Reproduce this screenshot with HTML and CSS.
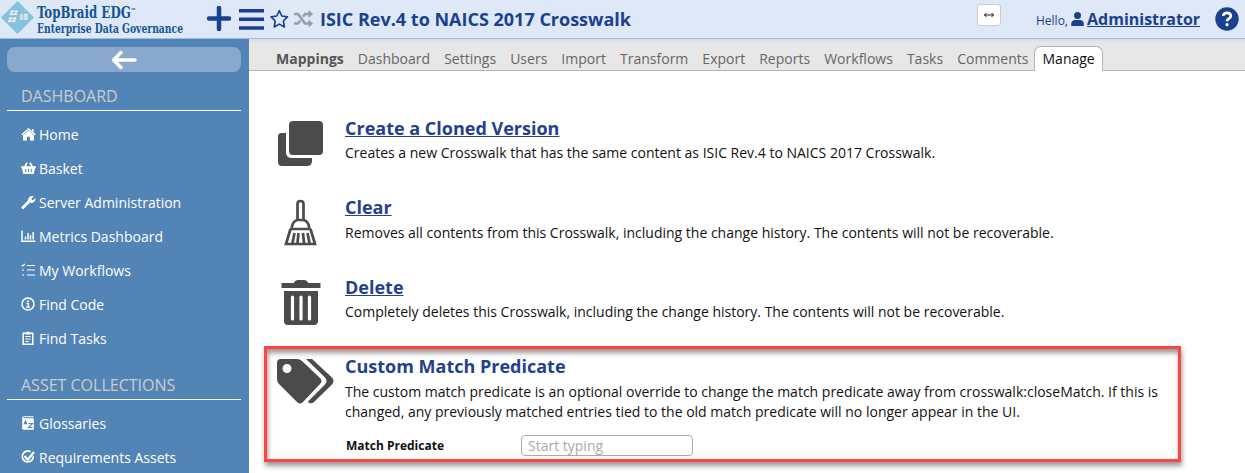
FILE: index.html
```html
<!DOCTYPE html>
<html lang="en">
<head>
<meta charset="utf-8">
<title>ISIC Rev.4 to NAICS 2017 Crosswalk</title>
<link rel="stylesheet" href="styles.css">
</head>
<body>
<header class="topbar">
  <svg class="logo" width="190" height="38" viewBox="0 0 190 38">
    <path d="M17.500 1L34 17.500L17.500 34L1 17.500Z" fill="#84c3df"/>
    <g fill="#eef4f7" stroke="#8fb0c2" stroke-width=".6">
      <path d="M10.500 10h8l-1.500 5.500H9zM9 17h8l-1.500 5.500H7.200zM19.500 14l8.500-.5.500 6.500h-9z"/>
      <path d="M10 12.800h8M8 19.800h8M19.500 16h9M19.500 18h9M14.500 10L13 15.500M13 17l-1.500 5.500M23.500 14v6" fill="none"/>
    </g>
    <g class="logo-text">
      <text x="37" y="17.500" font-size="16" textLength="99" lengthAdjust="spacingAndGlyphs">TopBraid EDG<tspan font-size="7" dy="-5">™</tspan></text>
      <text x="37" y="32.500" font-size="13.500" textLength="146" lengthAdjust="spacingAndGlyphs">Enterprise Data Governance</text>
    </g>
  </svg>
  <svg class="tool-icons" width="107" height="26" viewBox="0 0 107 26">
    <g fill="none" stroke="#19418f" stroke-linecap="round">
      <path d="M13 2v21M3 12.500h20" stroke-width="4.500"/>
      <path d="M33 4.700h25M33 13.300h25M33 22h25" stroke-width="3.600" stroke-linecap="butt"/>
      <path d="M73.300 4.700l2.500 5.300 5.700.9-4.100 4.100 1 6-5.100-2.900-5.100 2.900 1-6-4.100-4.100 5.700-.9z" stroke-width="1.600" stroke-linejoin="round"/>
    </g>
    <g fill="none" stroke="#989ca5" stroke-width="2.500"><path d="M88 8h4l7 9.500h4M88 17.500h4l2.300-3M97 10.800l2-2.800h4"/></g>
    <path d="M102.500 4l4.500 4-4.500 4zM102.500 13.500l4.500 4-4.500 4z" fill="#989ca5"/>
  </svg>
  <h1 class="title">ISIC Rev.4 to NAICS 2017 Crosswalk</h1>
  <button class="resize" aria-label="Resize"><svg width="12" height="8" viewBox="0 0 12 8"><path d="M1 4h10M3.500 2l-2 2 2 2M8.500 2l2 2-2 2" fill="none" stroke="#222"/></svg></button>
  <div class="account">
    <span class="hello">Hello,</span>
    <svg width="13" height="14" viewBox="0 0 13 14" fill="#19418f"><circle cx="6.500" cy="3.500" r="3.500"/><path d="M.2 14v-2c0-3 2-4 4-4h4.600c2 0 4 1 4 4v2z"/></svg>
    <a class="admin">Administrator</a>
  </div>
  <svg class="help" width="24" height="24" viewBox="0 0 24 24"><circle cx="12" cy="12" r="11.700" fill="#19418f"/><path d="M8.200 9c0-4.400 7.600-4 7.600 0 0 2.600-3.800 2.600-3.800 5.200" fill="none" stroke="#fff" stroke-width="2.700"/><circle cx="12" cy="17.700" r="1.600" fill="#fff"/></svg>
</header>
<div class="body">
  <aside class="sidebar">
    <button class="back" aria-label="Back"><svg width="26" height="20" viewBox="0 0 26 20"><path d="M24 10H3M10 2.500L2.500 10l7.500 7.500" fill="none" stroke="#fff" stroke-width="3.500" stroke-linecap="round" stroke-linejoin="round"/></svg></button>
    <h2 class="section">DASHBOARD</h2>
    <nav class="nav">
      <a><svg viewBox="0 0 15 14"><path d="M7.500 3.500L13 8v5.500H9V9.800H6v3.700H2V8z"/><path d="M.7 7.800L7.500 2l6.800 5.800M11.800 2v3" fill="none" stroke="#fff" stroke-width="1.500"/></svg>Home</a>
      <a><svg viewBox="0 0 15 14"><path d="M3.500 6.500L6 1.700M11.500 6.500L9 1.700" fill="none" stroke="#fff" stroke-width="1.700"/><path d="M.2 5.200h14.600v2H14L12.800 13H2.200L1 7.200H.2z"/><path d="M4.700 8v3M7.500 8v3M10.300 8v3" stroke="#5384b6"/></svg>Basket</a>
      <a><svg viewBox="0 0 15 14"><path d="M2 12.500L8.500 6" stroke="#fff" stroke-width="3" stroke-linecap="round"/><path d="M12.800 1.200L10.500 3.500l.3 1.300 1.400.4 2-2.200c1 4-3 5.700-5.400 4.500L7 6.200C6.500 2.500 9.600.2 12.800 1.200z"/></svg>Server Administration</a>
      <a><svg viewBox="0 0 15 14"><path d="M1 1.500v10.700h13.500M4.500 7.500v3M7 4v6.500M9.500 6v4.500M12.200 3v7.500" fill="none" stroke="#fff" stroke-width="1.500"/></svg>Metrics Dashboard</a>
      <a><svg viewBox="0 0 15 14"><path d="M6 2.500h8M6 7h8M6 12h8M.7 2l1 1L4 1M1 7h2M1 12h2" fill="none" stroke="#fff" stroke-width="1.200"/></svg>My Workflows</a>
      <a><svg viewBox="0 0 15 14"><circle cx="7" cy="7" r="6" fill="none" stroke="#fff" stroke-width="1.600"/><circle cx="7" cy="4.200" r="1"/><path d="M5.500 6.500h1.800V10M5.300 10.300h3.500" fill="none" stroke="#fff" stroke-width="1.400"/></svg>Find Code</a>
      <a><svg viewBox="0 0 15 14"><path d="M2.200 2.200h9.600v11H2.200z" fill="none" stroke="#fff" stroke-width="1.500"/><path d="M4.500 1.500h1L7 .2l1.500 1.300h1v2h-5zM4.300 5h5.400v1H4.300zM4.300 7.500h5.400v1H4.300zM4.300 10h3.500v1H4.300z"/></svg>Find Tasks</a>
    </nav>
    <h2 class="section second">ASSET COLLECTIONS</h2>
    <nav class="nav">
      <a><svg viewBox="0 0 15 14"><path d="M2.500.2h10v1h-10v1h10.300v11.600H2.200L1.200 13V1.500z"/><path d="M3 8.500L4.500 5 6 8.500M3.500 7.500h2M7.500 7.500h4l-4 4h4" fill="none" stroke="#5384b6" stroke-width="1.100"/></svg>Glossaries</a>
      <a><svg viewBox="0 0 15 14"><path d="M9.500 1.700A5.500 5.500 0 1 0 12.300 6" fill="none" stroke="#fff" stroke-width="1.700"/><path d="M3.500 6l3.200 3.700L13 2" fill="none" stroke="#fff" stroke-width="2.300"/></svg>Requirements Assets</a>
    </nav>
  </aside>
  <main class="main">
    <nav class="tabs">
      <a class="bold">Mappings</a><a>Dashboard</a><a>Settings</a><a>Users</a><a>Import</a><a>Transform</a><a>Export</a><a>Reports</a><a>Workflows</a><a>Tasks</a><a>Comments</a><a class="active">Manage</a>
    </nav>
    <div class="actions">
      <section class="action">
        <svg width="60" height="48" viewBox="0 0 60 48" fill="#4b4b4b"><rect x="17" y="1" width="34" height="34" rx="4"/><path d="M14 13H9.500Q6 13 6 16.500v25Q6 46 10 46h25q5 0 5-5v-3H20q-6 0-6-6z"/></svg>
        <div><h3><a>Create a Cloned Version</a></h3><p>Creates a new Crosswalk that has the same content as ISIC Rev.4 to NAICS 2017 Crosswalk.</p></div>
      </section>
      <section class="action">
        <svg width="60" height="48" viewBox="0 0 60 48" fill="none" stroke="#4b4b4b" stroke-width="2.700"><path d="M25.500 22V5q0-3 3-3t3 3v17M19.500 30q1-8 6-9h6q5 1 6 9zM18.500 30L14 45h29l-4.500-15M22.500 34l-2 10M26.500 34l-1 10M31 34l1 10M35.500 34l2 10"/></svg>
        <div><h3><a>Clear</a></h3><p>Removes all contents from this Crosswalk, including the change history. The contents will not be recoverable.</p></div>
      </section>
      <section class="action">
        <svg width="60" height="48" viewBox="0 0 60 48" fill="#4b4b4b"><path d="M9.500 4h12q2-3 4-3h7q2 0 4 3h12v5h-39zM12 12h34v30q0 4-4 4H16q-4 0-4-4z"/><path d="M20.500 18v22M29 18v22M37.500 18v22" stroke="#fff" stroke-width="3.200" stroke-linecap="round"/></svg>
        <div><h3><a>Delete</a></h3><p>Completely deletes this Crosswalk, including the change history. The contents will not be recoverable.</p></div>
      </section>
      <section class="action framed">
        <svg width="62" height="48" viewBox="0 0 62 48" fill="#4b4b4b"><path fill-rule="evenodd" d="M9 1h16q3 0 5 2l18 17q3 3 0 6L31 44q-3 3-6 0L7 26q-2-2-2-5V5q0-4 4-4zM15 6a4.500 4.500 0 1 0 0 9a4.500 4.500 0 1 0 0-9"/><path d="M34 1h6l20 18.500q3 3.500 0 7L43 43q-2 3-6 2l-1-1.500L52.500 27q4-4 0-8z"/></svg>
        <div><h3>Custom Match Predicate</h3><p class="long">The custom match predicate is an optional override to change the match predicate away from crosswalk:closeMatch. If this is<br>changed, any previously matched entries tied to the old match predicate will no longer appear in the UI.</p>
          <div class="field"><label for="predicate">Match Predicate</label><input id="predicate" placeholder="Start typing"></div>
        </div>
      </section>
    </div>
  </main>
</div>
</body>
</html>
```

FILE: styles.css
```css
* { box-sizing: border-box; }
body { margin: 0; width: 1245px; height: 473px; overflow: hidden; font-family: "Open Sans", sans-serif; font-size: 14px; color: #111; background: #fff; }
h1, h2, h3, p { margin: 0; }
button { padding: 0; border: 0; }
svg { display: block; flex: none; }

.topbar { height: 39px; display: flex; align-items: center; background: #dfe8f6; border-bottom: 1px solid #99bbe8; color: #19418f; }
.logo { width: 190px; overflow: visible; }
.logo-text { font-family: "DejaVu Serif Condensed", "DejaVu Serif", serif; font-weight: bold; fill: #145592; }
.tool-icons { margin-left: 16px; }
.title { margin-left: 7px; width: 657px; font-size: 18px; line-height: 38px; white-space: nowrap; }
.resize { width: 24px; height: 22px; margin-top: -8px; border: 1px solid #ccc; border-radius: 3px; background: #fff; display: grid; place-items: center; }
.account { display: flex; align-items: center; margin-left: 35px; width: 178px; white-space: nowrap; }
.hello { font-size: 12px; width: 35px; padding-top: 2px; }
.admin { margin-left: 3px; font-size: 16px; font-weight: bold; text-decoration: underline; }
.help { margin-left: auto; margin-right: 6px; }

.body { display: flex; height: 434px; }
.sidebar { width: 249px; background: #5384b6; padding: 8px 8px 0 7px; overflow: hidden; }
.back { width: 234px; height: 25px; border-radius: 8px; background: #89a8cd; display: grid; place-items: center; }
.section { height: 39px; padding: 11px 14px 0; border-bottom: 1px solid #fff; font-weight: normal; font-size: 16px; line-height: 26px; color: #ccc; }
.second { margin-top: 11px; height: 34px; padding-top: 6px; }
.nav { padding: 6px 0 0 14px; color: #fff; }
.nav a { display: flex; align-items: center; height: 34px; }
.nav svg { width: 15px; height: 14px; margin-right: 3px; fill: #fff; }

.main { flex: 1; }
.tabs { display: flex; align-items: flex-end; height: 32px; padding-left: 20px; background: linear-gradient(#dcdcdc, #e7e7e7 4px); border-bottom: 1px solid #b5b5b5; color: #666; }
.tabs a { padding: 0 7px; line-height: 22px; letter-spacing: .01px; }
.tabs .bold { font-weight: bold; color: #555; }
.tabs .active { margin: 0 0 -1px -1px; border: 1px solid #b5b5b5; border-bottom: 0; border-radius: 7px 7px 0 0; background: #fff; color: #111; height: 25px; line-height: 24px; }

.actions { padding: 45.500px 0 0 23px; }
.action { display: flex; height: 79.500px; }
.action > svg { margin-top: 3px; margin-right: 13px; }
.action h3 { font-size: 18px; line-height: 23px; color: #253f8e; }
.action h3 a { text-decoration: underline; }
.action p { line-height: 24px; padding-top: 1.500px; font-size: 14px; white-space: nowrap; }
.framed { width: 917px; height: 116px; margin: -9.500px 0 0 -8px; padding: 6px 0 0 5px; border: 3px solid #ff4444; box-shadow: 1px 4px 5px rgba(0,0,0,.4), inset 1px 4px 5px rgba(0,0,0,.4); }
.framed > svg { margin-top: 3px; margin-right: 11px; }
.action .long { line-height: 20px; padding-top: 4px; }
.field { display: flex; align-items: center; margin-top: 13px; }
.field label { width: 176px; padding-left: 1px; font-size: 12px; font-weight: bold; }
.field input { width: 172px; height: 21px; padding: 0 6px; border: 1px solid #aaa; border-radius: 4px; font: 14px "Open Sans", sans-serif; }
.field input::placeholder { color: #aaa; }
```
